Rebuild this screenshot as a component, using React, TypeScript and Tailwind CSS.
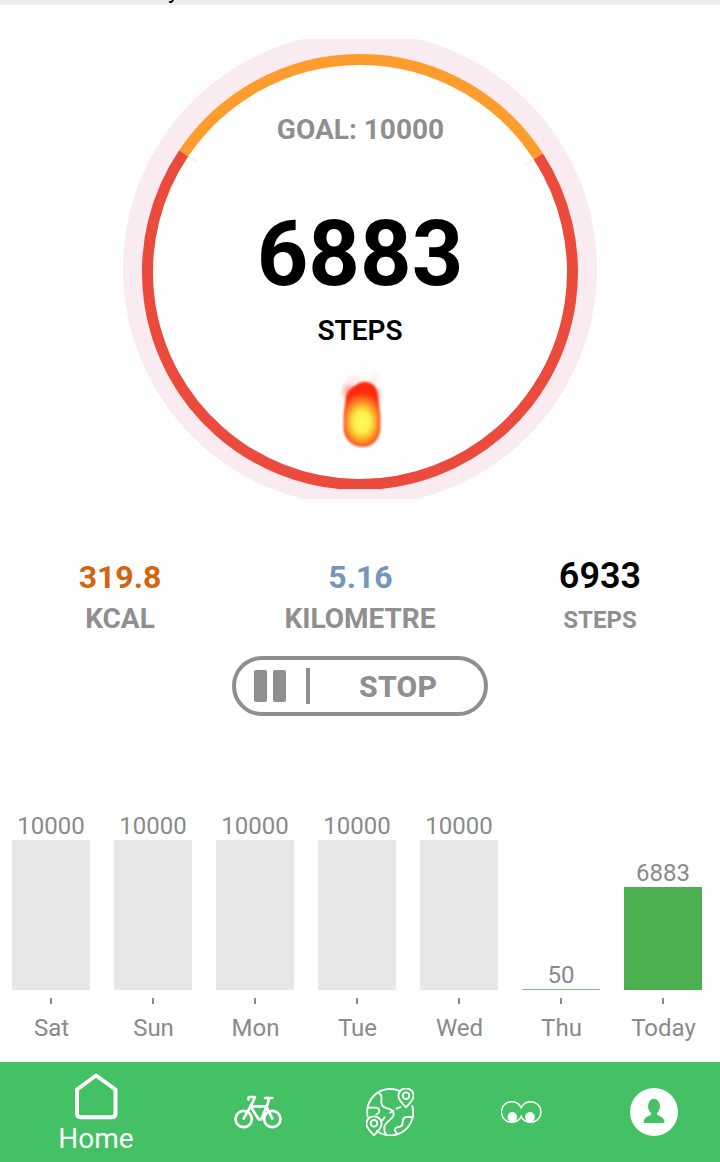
import clsx from "clsx";

const GOAL = 10000;

const days = [
  { day: "Sat", steps: 10000 },
  { day: "Sun", steps: 10000 },
  { day: "Mon", steps: 10000 },
  { day: "Tue", steps: 10000 },
  { day: "Wed", steps: 10000 },
  { day: "Thu", steps: 50 },
  { day: "Today", steps: 6883 },
];

function Flame() {
  return (
    <svg width="80" height="100" viewBox="0 0 80 100">
      <defs>
        <radialGradient
          id="flame"
          gradientUnits="userSpaceOnUse"
          cx="42"
          cy="62"
          r="21"
          gradientTransform="translate(42 62) scale(1.1 1.4) translate(-42 -62)"
        >
          <stop offset="0" stopColor="#fffb58" />
          <stop offset="0.35" stopColor="#fff24c" />
          <stop offset="0.58" stopColor="#ffae2c" />
          <stop offset="0.8" stopColor="#ff6a1c" />
          <stop offset="1" stopColor="#ff2c10" />
        </radialGradient>
        <filter id="soft" x="-30%" y="-30%" width="160%" height="160%">
          <feGaussianBlur stdDeviation="0.9" />
        </filter>
        <filter id="smoke" x="-50%" y="-50%" width="200%" height="200%">
          <feGaussianBlur stdDeviation="2" />
        </filter>
      </defs>
      <g filter="url(#smoke)" fill="#ff3a20">
        <ellipse cx="29" cy="32" rx="6" ry="8" opacity="0.4" />
        <ellipse cx="34" cy="20" rx="7" ry="3" opacity="0.14" />
        <ellipse cx="54" cy="19" rx="4" ry="6" opacity="0.08" />
        <ellipse cx="58" cy="36" rx="3" ry="8" opacity="0.25" />
      </g>
      <path
        d="M26.500 39C27 30 33 28 37 25C41 22 47 21.500 51 24C56 27 57.500 32 57.500 38L59.500 56V68C59 79 52 86 42.500 86C33 86 25 79 24.500 69V54Z"
        fill="url(#flame)"
        stroke="#ff2c10"
        strokeWidth="1.5"
        filter="url(#soft)"
      />
    </svg>
  );
}

function Gauge() {
  return (
    <section className="mt-[34px] grid h-[460px] justify-items-center overflow-hidden">
      <svg
        className="[grid-area:1/1]"
        width="474"
        height="460"
        viewBox="123 39 474 460"
      >
        <clipPath id="ring">
          <rect x="123" y="39" width="474" height="450" />
        </clipPath>
        <circle cx="360" cy="269" r="237" fill="#faebf0" />
        <circle cx="360" cy="272" r="212" fill="#fff" />
        <g clipPath="url(#ring)" fill="none" strokeWidth="11">
          <path
            d="M538.200 156.300A212.500 212.500 0 1 1 183.700 153.300"
            stroke="#ea4b3d"
          />
          <path
            d="M183.700 153.300A212.500 212.500 0 0 1 538.200 156.300"
            stroke="#ff9c2e"
          />
        </g>
        <path
          d="M188 156.500L196.500 162M534 159L524.500 165"
          stroke="#f3d9b5"
          strokeWidth="0.7"
        />
      </svg>
      <div className="flex flex-col items-center pt-[75px] [grid-area:1/1]">
        <p className="pl-px text-[28px] leading-8 font-bold text-[#8f8f8f]">
          GOAL: {GOAL}
        </p>
        <p className="mt-[61px] text-[90px] leading-[96px] font-bold">6883</p>
        <p className="mt-3 text-[28px] leading-8 font-semibold">STEPS</p>
        <div className="mt-[13px]">
          <Flame />
        </div>
      </div>
    </section>
  );
}

function Stats() {
  return (
    <section className="pt-[57px] text-center">
      <div className="grid grid-cols-3 items-baseline leading-10">
        <p className="text-[32px] font-bold text-[#d5640f]">319.8</p>
        <p className="pl-px text-[32px] font-bold text-[#7396b9]">5.16</p>
        <p className="text-4xl leading-10 font-semibold">6933</p>
      </div>
      <div className="mt-1.5 grid grid-cols-3 items-baseline leading-8 text-[#8f8f8f]">
        <p className="text-[28px] font-bold">KCAL</p>
        <p className="text-[28px] font-bold">KILOMETRE</p>
        <p className="text-2xl leading-8 font-bold">STEPS</p>
      </div>
    </section>
  );
}

function StopButton() {
  return (
    <button className="mx-auto mt-5 flex h-[60px] w-64 shrink-0 items-center rounded-full border-4 border-[#8f8f8f] pl-[18px] text-[#8f8f8f]">
      <span className="h-8 w-[13px] rounded-[2px] bg-[#8f8f8f]" />
      <span className="ml-1.5 h-8 w-[13px] rounded-[2px] bg-[#8f8f8f]" />
      <span className="ml-5 h-9 w-1 bg-[#8f8f8f]" />
      <span className="ml-[49px] pt-0.5 text-[30px] leading-8 font-extrabold tracking-[0.3px]">
        STOP
      </span>
    </button>
  );
}

function Chart() {
  return (
    <section className="mt-[94px] flex gap-6 pl-3 text-2xl text-[#8a8a8a]">
      {days.map(({ day, steps }) => (
        <div key={day} className="flex w-[78px] flex-col items-center">
          <div className="flex h-[180px] w-full flex-col items-center justify-end">
            <span className="leading-7">{steps}</span>
            <div
              className={clsx(
                "w-full",
                steps >= GOAL ? "bg-[#e6e8e5]" : "bg-[#4caf50]",
                steps < 100 && "opacity-75"
              )}
              style={{ height: Math.max(1, (steps / GOAL) * 150) }}
            />
          </div>
          <div className="mt-2 h-1.5 w-0.5 bg-[#8a8a8a]" />
          <span className="mt-[10px] pl-px leading-7">{day}</span>
        </div>
      ))}
    </section>
  );
}

function HomeIcon() {
  return (
    <svg width="48" height="48" viewBox="0 0 48 48" fill="none">
      <path
        d="M24 3.500L5 17.500V41.500Q5 45.300 8.800 45.300H39.700Q43.500 45.300 43.500 41.500V17.500Z"
        stroke="#fff"
        strokeWidth="4"
        strokeLinejoin="round"
      />
    </svg>
  );
}

function BikeIcon() {
  return (
    <svg width="48" height="36" viewBox="42 42 144 108" fill="none">
      <g stroke="#fff" strokeWidth="8" strokeLinecap="round" strokeLinejoin="round">
        <circle cx="71" cy="117" r="24.500" />
        <circle cx="157" cy="117" r="24.500" />
        <path d="M86 58Q84 51 90 51H105L97 69L71 116" />
        <path d="M95 79H139M92 80L116 118H124L145 67V54M139 80L157 116" />
        <path d="M135 54H157" />
      </g>
    </svg>
  );
}

function MapIcon() {
  return (
    <svg width="48" height="48" viewBox="48 39 144 144" fill="none">
      <g stroke="#fff" strokeWidth="5.500" strokeLinecap="round" strokeLinejoin="round">
        <path d="M147 47A69 69 0 0 0 53 125M80 168A69 69 0 0 0 187 93" />
        <path d="M84 52C97 59 95 68 94 78C93 91 101 98 112 100C127 103 132 109 131 119C130 132 106 140 103 155Q101 168 109 179" />
        <path d="M53 98H79Q88 99 88 107Q88 115 79 118" />
        <path d="M188 126H170Q158 127 158 141Q158 156 145 156Q134 157 135 166L140 176" />
        <path d="M151 96L140 101M130 107L120 113M104 127L97 136" />
        <path d="M168 97Q145 74 145 62A23 22 0 0 1 191 62Q191 74 168 97Z" />
        <circle cx="168" cy="62" r="10" />
        <path d="M72 181Q49 158 49 146A23 22 0 0 1 95 146Q95 158 72 181Z" />
        <circle cx="72" cy="145" r="10" />
      </g>
    </svg>
  );
}

function EyesIcon() {
  return (
    <svg width="42" height="24" viewBox="63 75 126 72">
      <path
        d="M123.500 98A31 31 0 1 0 123.500 124A31 31 0 1 0 123.500 98Z"
        fill="none"
        stroke="#fff"
        strokeWidth="4.500"
      />
      <g fill="#fff">
        <ellipse cx="97" cy="126" rx="14.500" ry="15" />
        <ellipse cx="150" cy="126" rx="14.500" ry="15" />
      </g>
    </svg>
  );
}

function UserIcon() {
  return (
    <svg width="48" height="48" viewBox="450 39 144 144">
      <circle cx="522" cy="111" r="72" fill="#fff" />
      <g fill="#43c164">
        <ellipse cx="522" cy="94" rx="18" ry="23" />
        <path d="M491 144V137Q493 127 513 119V108H531V119Q551 127 553 137V144Z" />
      </g>
    </svg>
  );
}

function NavBar() {
  return (
    <nav className="mt-auto flex h-[100px] shrink-0 bg-[#43c164] text-white">
      <div className="flex w-48 flex-col items-center pt-2.5">
        <HomeIcon />
        <span className="mt-[3px] text-[28px] leading-8">Home</span>
      </div>
      <div className="grid flex-1 grid-cols-4 place-items-center">
        <BikeIcon />
        <MapIcon />
        <EyesIcon />
        <UserIcon />
      </div>
    </nav>
  );
}

function App() {
  return (
    <div className="flex h-[1162px] w-[720px] flex-col overflow-hidden bg-white font-[Roboto,sans-serif] text-black">
      {/* tail of the row scrolled away above */}
      <div className="flex h-[5px] shrink-0 items-end overflow-hidden bg-[#eeeeee] pl-[168px] text-2xl leading-[30px]">
        y
      </div>
      <Gauge />
      <Stats />
      <StopButton />
      <Chart />
      <NavBar />
    </div>
  );
}

export default App;
